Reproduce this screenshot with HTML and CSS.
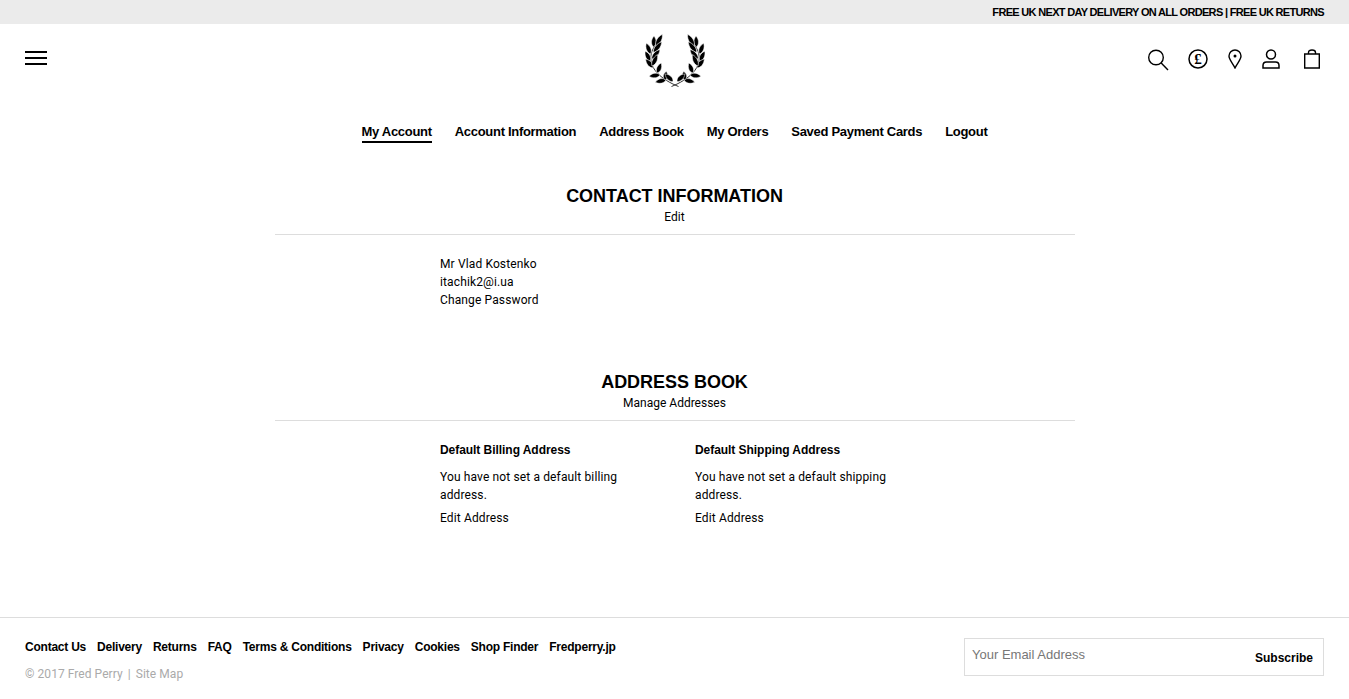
FILE: index.html
```html
<!DOCTYPE html>
<html>
<head>
  <title>My Account</title>
  <link rel="stylesheet" href="styles.css">
</head>
<body>
  <div class="topbar">FREE UK NEXT DAY DELIVERY ON ALL ORDERS | FREE UK RETURNS</div>

  <header class="header">
    <div class="burger"><span></span><span></span><span></span></div>
    <svg class="logo" width="60" height="56" viewBox="0 0 60 56">
      <defs>
        <path id="leaf" d="M0 0C-3-2.800-3.100-7.500-.3-11.500C3-7.500 3-2.800 0 0Z" stroke="#fff" stroke-width=".5"/>
        <g id="branch">
          <path d="M12.700 9.300C7.500 15 5 21.500 6 27.700C7 36 15 46 33.500 53.500" fill="none" stroke="#000" stroke-width=".8"/>
          <use href="#leaf" transform="translate(8.500 14) rotate(4) scale(1 .95)"/>
          <use href="#leaf" transform="translate(10.700 12.700) rotate(32) scale(1 1.150)"/>
          <use href="#leaf" transform="translate(5.500 21) rotate(-20)"/>
          <use href="#leaf" transform="translate(8.300 19.300) rotate(40) scale(1 1.180)"/>
          <use href="#leaf" transform="translate(5 28) rotate(-24) scale(1 .95)"/>
          <use href="#leaf" transform="translate(6.700 26) rotate(42) scale(1 1.100)"/>
          <use href="#leaf" transform="translate(8 35) rotate(-38)"/>
          <use href="#leaf" transform="translate(7 33) rotate(27) scale(1 1.100)"/>
          <use href="#leaf" transform="translate(15 42) rotate(-95) scale(1 .95)"/>
          <use href="#leaf" transform="translate(12 40) rotate(24) scale(1 .95)"/>
          <use href="#leaf" transform="translate(21 47) rotate(-100) scale(1 .95)"/>
          <use href="#leaf" transform="translate(20 47) rotate(10) scale(1 .75)"/>
          <use href="#leaf" transform="translate(28 48.500) rotate(-45) scale(1 .95)"/>
        </g>
      </defs>
      <use href="#branch"/>
      <use href="#branch" transform="translate(60 0) scale(-1 1)"/>
    </svg>
    <div class="header-icons">
      <svg class="icon-search" width="22" height="22" viewBox="0 0 22 22" fill="none" stroke="#000" stroke-width="1.400"><circle cx="9" cy="8.500" r="7.300"/><path d="M14.200 14L21 21"/></svg>
      <svg class="icon-currency" width="20" height="20" viewBox="0 0 20 20" fill="none" stroke="#000" stroke-width="1.500"><circle cx="10" cy="10" r="9"/><text x="10" y="15" text-anchor="middle" class="pound">£</text></svg>
      <svg class="icon-pin" width="14" height="20" viewBox="0 0 14 20" fill="none" stroke="#000" stroke-width="1.400"><path d="M7 19C4.500 14 1 10.500 1 7A6 6 0 0 1 13 7C13 10.500 9.500 14 7 19Z"/><circle cx="7" cy="7" r="1.500" fill="#000" stroke="none"/></svg>
      <svg class="icon-user" width="18" height="20" viewBox="0 0 18 20" fill="none" stroke="#000" stroke-width="1.500"><circle cx="9" cy="5.500" r="4.500"/><path d="M4.500 13H13.500C15.500 13 17 14.500 17 16.500V19H1V16.500C1 14.500 2.500 13 4.500 13Z"/></svg>
      <svg class="icon-bag" width="18" height="20" viewBox="0 0 18 20" fill="none" stroke="#000" stroke-width="1.400"><path d="M1.700 5H16.300V19H1.700Z"/><path d="M5.500 5V3.500C5.500 1.800 6.800 1 9 1S12.500 1.800 12.500 3.500V5"/></svg>
    </div>
  </header>

  <nav class="account-nav">
    <a class="active" href="#">My Account</a>
    <a href="#">Account Information</a>
    <a href="#">Address Book</a>
    <a href="#">My Orders</a>
    <a href="#">Saved Payment Cards</a>
    <a href="#">Logout</a>
  </nav>

  <section class="block contact">
    <div class="block-head">
      <h2>CONTACT INFORMATION</h2>
      <a href="#">Edit</a>
    </div>
    <div class="block-body">
      <p>Mr Vlad Kostenko</p>
      <p>itachik2@i.ua</p>
      <p><a href="#">Change Password</a></p>
    </div>
  </section>

  <section class="block addresses">
    <div class="block-head">
      <h2>ADDRESS BOOK</h2>
      <a href="#">Manage Addresses</a>
    </div>
    <div class="block-body columns">
      <div class="address">
        <h3>Default Billing Address</h3>
        <p>You have not set a default billing address.</p>
        <a href="#">Edit Address</a>
      </div>
      <div class="address">
        <h3>Default Shipping Address</h3>
        <p>You have not set a default shipping address.</p>
        <a href="#">Edit Address</a>
      </div>
    </div>
  </section>

  <footer class="footer">
    <div class="footer-left">
      <div class="footer-links">
        <a href="#">Contact Us</a>
        <a href="#">Delivery</a>
        <a href="#">Returns</a>
        <a href="#">FAQ</a>
        <a href="#">Terms &amp; Conditions</a>
        <a href="#">Privacy</a>
        <a href="#">Cookies</a>
        <a href="#">Shop Finder</a>
        <a href="#">Fredperry.jp</a>
      </div>
      <div class="copyright">© 2017 Fred Perry<span class="sep">|</span>Site Map</div>
    </div>
    <form class="subscribe">
      <span class="email">Your Email Address</span>
      <button type="button">Subscribe</button>
    </form>
  </footer>
</body>
</html>
```

FILE: styles.css
```css
* {
  box-sizing: border-box;
}
body {
  margin: 0;
  height: 699px;
  overflow: hidden;
  font-family: Roboto, "Liberation Sans", sans-serif;
  font-size: 12px;
  line-height: 18px;
  letter-spacing: 0.13px;
  color: #000;
  background-color: #fff;
}
a {
  color: #000;
  text-decoration: none;
}
p {
  margin: 0;
}

/* top strip */
.topbar {
  height: 24px;
  padding-right: 25px;
  background-color: #ebebeb;
  font-family: "Liberation Sans", Arial, sans-serif;
  font-size: 11px;
  font-weight: bold;
  line-height: 25px;
  letter-spacing: -0.68px;
  text-align: right;
}

/* header */
.header {
  display: flex;
  justify-content: space-between;
  height: 70px;
  padding: 0 25px;
  position: relative;
}
.burger {
  display: flex;
  flex-direction: column;
  gap: 4px;
  width: 22px;
  margin-top: 27px;
}
.burger span {
  height: 2px;
  background-color: #000;
}
.logo {
  position: absolute;
  left: 645px;
  top: 9px;
}
.header-icons {
  display: flex;
  align-items: flex-start;
  padding-top: 25px;
  padding-right: 3px;
}
.icon-currency {
  margin-left: 19px;
}
.icon-pin {
  margin-left: 20px;
}
.icon-user {
  margin-left: 20px;
}
.icon-bag {
  margin-left: 23px;
}
.pound {
  font-family: "Liberation Serif", serif;
  font-size: 15px;
  font-weight: bold;
  fill: #000;
  stroke: none;
  letter-spacing: 0;
}

/* account nav */
.account-nav {
  display: flex;
  justify-content: center;
  gap: 23px;
  margin-top: 29px;
  font-family: "Liberation Sans", Arial, sans-serif;
  font-size: 13px;
  font-weight: bold;
  line-height: 18px;
  letter-spacing: -0.3px;
}
.account-nav a {
  border-bottom: 2px solid transparent;
}
.account-nav a.active {
  border-bottom-color: #000;
}

/* blocks */
.block {
  width: 800px;
  margin: 0 auto;
}
.contact {
  margin-top: 41px;
}
.addresses {
  margin-top: 61px;
}
.block-head {
  padding-bottom: 8px;
  border-bottom: 1px solid #ddd;
  text-align: center;
  letter-spacing: 0;
}
.block-head h2 {
  margin: 0;
  font-family: "Liberation Sans", Arial, sans-serif;
  font-size: 18px;
  font-weight: bold;
  line-height: 24px;
  letter-spacing: -0.03px;
}
.block-body {
  padding: 20px 0 0 165.5px;
}
.block-head a {
  display: block;
  line-height: 18px;
}
.columns {
  display: flex;
  padding-top: 20px;
}
.address {
  width: 255px;
  padding-right: 50px;
}
.address h3 {
  margin: 0 0 9px;
  font-family: "Liberation Sans", Arial, sans-serif;
  font-size: 12px;
  font-weight: bold;
  line-height: 18px;
  letter-spacing: -0.05px;
}
.address a {
  display: block;
  margin-top: 5px;
}

/* footer */
.footer {
  position: absolute;
  left: 0;
  right: 0;
  top: 617px;
  display: flex;
  justify-content: space-between;
  height: 82px;
  padding: 20px 25px 0;
  border-top: 1px solid #ddd;
}
.footer-links {
  display: flex;
  gap: 11px;
  font-family: "Liberation Sans", Arial, sans-serif;
  font-size: 12px;
  font-weight: bold;
  letter-spacing: -0.23px;
}
.copyright {
  margin-top: 9px;
  color: #aaa;
  letter-spacing: 0.06px;
}
.sep {
  margin: 0 5px;
}
.subscribe {
  display: flex;
  justify-content: space-between;
  width: 360px;
  height: 38px;
  padding: 7px 10px 0 7px;
  border: 1px solid #ddd;
  font-family: "Liberation Sans", Arial, sans-serif;
}
.email {
  color: #777;
  font-size: 13px;
  letter-spacing: 0;
}
.subscribe button {
  height: 18px;
  margin-top: 3px;
  padding: 0;
  border: none;
  background: none;
  font-family: inherit;
  font-size: 12px;
  font-weight: bold;
  line-height: 18px;
}
```
